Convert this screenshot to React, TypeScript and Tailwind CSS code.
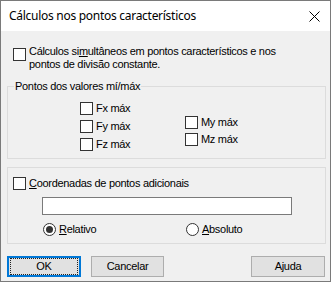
const Check = ({ label }: { label: React.ReactNode }) => (
  <div className="flex items-center h-[13px]">
    <span className="w-[13px] h-[13px] border border-[#333333] bg-white shrink-0" />
    <span className="ml-[3px] leading-[13px] whitespace-nowrap">{label}</span>
  </div>
);

const Radio = ({ label, on }: { label: React.ReactNode; on?: boolean }) => (
  <div className="flex items-center h-[13px]">
    <span className="w-[13px] h-[13px] rounded-full border border-[#333333] bg-white shrink-0 flex items-center justify-center">
      {on && <span className="w-[7px] h-[7px] rounded-full bg-[#333333]" />}
    </span>
    <span className="ml-[3px] leading-[13px] whitespace-nowrap">{label}</span>
  </div>
);

const Btn = ({ children, w, focus }: { children: React.ReactNode; w: string; focus?: boolean }) => (
  <div
    className={`${w} h-[21px] flex items-center justify-center bg-[#e1e1e1] ${
      focus ? "border-2 border-[#0078d7]" : "border border-[#adadad]"
    }`}
  >
    {focus ? (
      <div className="w-full h-full m-[1px] border border-dotted border-[#222] flex items-center justify-center">
        {children}
      </div>
    ) : (
      children
    )}
  </div>
);

export default function App() {
  return (
    <div
      className="w-[331px] h-[282px] border border-[#7a7a7a] flex flex-col text-[11px] tracking-[-0.3px] text-black"
      style={{ fontFamily: '"Liberation Sans", Arial, sans-serif' }}
    >
      <div className="h-[30px] bg-white flex items-center justify-between pl-[8px] pr-[10px] shrink-0">
        <span
          className="text-[12px] tracking-[-0.28px]"
          style={{ fontFamily: '"Noto Sans", "Open Sans", sans-serif' }}
        >
          Cálculos nos pontos característicos
        </span>
        <svg width="11" height="11" viewBox="0 0 11 11" className="mt-[1px]">
          <path d="M0.5 0.5 L10.5 10.5 M10.5 0.5 L0.5 10.5" stroke="#000" strokeWidth="1" />
        </svg>
      </div>

      <div className="flex-1 bg-[#f0f0f0] flex flex-col">
        <div className="flex items-start mt-[14px] pl-[12px]">
          <span className="w-[13px] h-[13px] border border-[#333333] bg-white shrink-0 mt-[3px]" />
          <span className="ml-[3px] leading-[13px]">
            Cálculos si<u>m</u>ultâneos em pontos característicos e nos
            <br />
            pontos de divisão constante.
          </span>
        </div>

        <fieldset className="mt-[9px] ml-[6px] w-[319px] h-[79px] border border-[#dcdcdc]">
          <legend className="ml-[6px] px-[1px] leading-[13px]">Pontos dos valores mí/máx</legend>
          <div className="flex">
            <div className="ml-[72px] w-[105px] mt-[9px] flex flex-col gap-[5px]">
              <Check label="Fx máx" />
              <Check label="Fy máx" />
              <Check label="Fz máx" />
            </div>
            <div className="mt-[23px] flex flex-col gap-[4px]">
              <Check label="My máx" />
              <Check label="Mz máx" />
            </div>
          </div>
        </fieldset>

        <fieldset className="mt-[8px] ml-[6px] w-[319px] h-[77px] border border-[#dcdcdc] pl-[5px] pt-[9px]">
          <Check
            label={
              <>
                <u>C</u>oordenadas de pontos adicionais
              </>
            }
          />
          <div className="mt-[7px] ml-[29px] w-[250px] h-[18px] bg-white border border-[#7a7a7a]" />
          <div className="flex mt-[8px] ml-[30px]">
            <div className="w-[143px]">
              <Radio
                on
                label={
                  <>
                    <u>R</u>elativo
                  </>
                }
              />
            </div>
            <Radio
              label={
                <>
                  <u>A</u>bsoluto
                </>
              }
            />
          </div>
        </fieldset>

        <div className="flex mt-[12px] ml-[6px]">
          <Btn w="w-[74px]" focus>
            OK
          </Btn>
          <div className="ml-[10px]">
            <Btn w="w-[73px]">Cancelar</Btn>
          </div>
          <div className="ml-[87px]">
            <Btn w="w-[74px]">Ajuda</Btn>
          </div>
        </div>
      </div>
    </div>
  );
}
